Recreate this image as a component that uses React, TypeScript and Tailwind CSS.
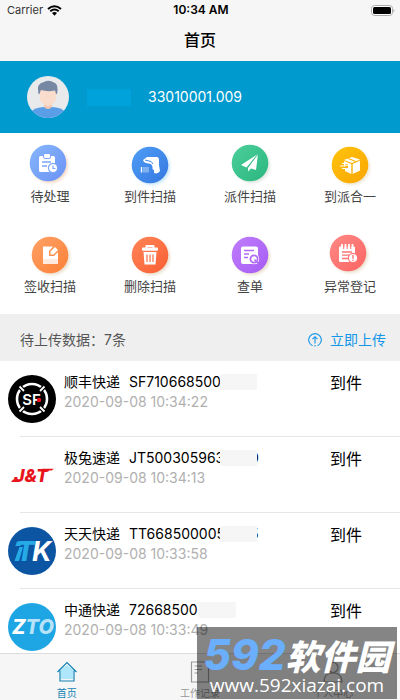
import React from "react";

type Action = {
  label: string;
  cx: number;
  cy: number;
  from: string;
  to: string;
  shadow: string;
  glyph: React.ReactNode;
};

// Glyphs are drawn around (0,0), the centre of their disc.
const actions: Action[] = [
  {
    label: "待处理", cx: 20, cy: 20, from: "#86b6fb", to: "#6b92f6", shadow: "#f3d9c4",
    glyph: (
      <>
        <rect x="-9" y="-7" width="16" height="16" rx="1.5" fill="#fff" />
        <rect x="-4.500" y="-9.500" width="7" height="5" rx="1.5" fill="#fff" stroke="#7ba6f9" />
        <path d="M-6 -1H3M-6 3H-1" stroke="#7ba6f9" strokeWidth="1.3" />
        <circle cx="5" cy="5" r="4.600" fill="#fff" stroke="#7ba6f9" strokeWidth="1.2" />
        <path d="M5 2.600V5.500H7.500" fill="none" stroke="#7ba6f9" strokeWidth="1.2" />
      </>
    ),
  },
  {
    label: "到件扫描", cx: 22, cy: 22, from: "#4e9df5", to: "#3578e0", shadow: "#c9e6f7",
    glyph: (
      <>
        <path d="M-7 -5L-3 -8H6Q9 -8.500 9 -5V0L10 6Q8 9.500 4 8L4 5Q2 5 2.500 1.500L1 -1L-4 -2L-6 -3Z" fill="#fff" />
        <path d="M-5 -5L1 -3.500L3 -1" fill="none" stroke="#4389ea" strokeWidth="1" />
        <path d="M-8.500 2V7.500" stroke="#fff" strokeWidth="1.4" />
        <path d="M-6 2V7.500M-4 2V7.500M-2 2V7.500" stroke="#fff" strokeWidth="0.9" opacity="0.75" />
      </>
    ),
  },
  {
    label: "派件扫描", cx: 22, cy: 20, from: "#4ccf9b", to: "#2bb67f", shadow: "#dfe6e0",
    glyph: (
      <>
        <path d="M8 -9L-9 2L-3.500 4.500Z" fill="#fff" />
        <path d="M8 -9L-2 5V8.500L1 5.500L6 7Z" fill="#fff" />
        <path d="M8 -9L-2.800 4.800V8" fill="none" stroke="#39c08b" strokeWidth="0.9" />
      </>
    ),
  },
  {
    label: "到派合一", cx: 22, cy: 22, from: "#fec40c", to: "#f9a502", shadow: "#eee7d6",
    glyph: (
      <>
        <path d="M-6 -5L2 -8L10 -5.500L2 -2Z" fill="#fff" />
        <path d="M-6 -4L1.300 -1V9L-5 6V3H-2V1H-6Z" fill="#fff" />
        <path d="M2.700 -1L10 -4.500V5.500L2.700 9Z" fill="#fff" />
        <path d="M-2 -6.500L6 -3.500" stroke="#fcb409" strokeWidth="1.1" />
        <path d="M-8 -1.500H-3M-10 1H-4M-8 3.500H-4" stroke="#fff" strokeWidth="1.2" />
        <path d="M-5 -.2H-2M-5 2.200H-2" stroke="#fcb409" strokeWidth=".9" />
      </>
    ),
  },
  {
    label: "签收扫描", cx: 22, cy: 22, from: "#ffa266", to: "#fb8037", shadow: "#eadfce",
    glyph: (
      <>
        <path d="M-7 -8.500H3L-1 -4V1H4L8 -3V9H-7Z" fill="#fff" />
        <path d="M.5 -.5V-3.500L5 -8L8 -5L3.500 -.5Z" fill="#fff" />
        <path d="M-7 4H8V9H-7Z" fill="#fb8c46" opacity=".18" />
      </>
    ),
  },
  {
    label: "删除扫描", cx: 22, cy: 22, from: "#ff8557", to: "#f95f33", shadow: "#eadfce",
    glyph: (
      <>
        <path d="M-3.500 -7V-9H3.500V-7" fill="none" stroke="#fff" strokeWidth="1.8" />
        <rect x="-8" y="-7.500" width="16" height="3.200" rx="1" fill="#fff" />
        <path d="M-6.500 -3H6.500L5.500 9.500H-5.500Z" fill="#fff" />
        <path d="M-3 -.5V7M0 -.5V7M3 -.5V7" stroke="#fb7044" strokeWidth="1.2" />
      </>
    ),
  },
  {
    label: "查单", cx: 22, cy: 22, from: "#c07dfb", to: "#a55cf4", shadow: "#eadfce",
    glyph: (
      <>
        <path d="M-7 -8.500H6Q8 -8.500 8 -6.500V9H-7Q-9 9 -9 7V-6.500Q-9 -8.500 -7 -8.500Z" fill="#fff" />
        <path d="M-6 -4.500H4M-6 -1H-1M-6 2.500H-2" stroke="#b16cf7" strokeWidth="1.3" />
        <circle cx="4" cy="4" r="5.200" fill="#fff" />
        <circle cx="4" cy="4" r="3.600" fill="none" stroke="#b16cf7" strokeWidth="1.800" />
        <path d="M4.500 4.500L8.500 9" stroke="#b16cf7" strokeWidth="1.600" />
      </>
    ),
  },
  {
    label: "异常登记", cx: 20, cy: 20, from: "#ff8a85", to: "#fb6464", shadow: "#eadfce",
    glyph: (
      <>
        <rect x="-9" y="-6.500" width="16" height="15.500" rx="1" fill="#fff" />
        <path d="M-6 -9V-5M-2.500 -9V-5M1 -9V-5M4.500 -9V-5" stroke="#fff" strokeWidth="1.800" />
        <path d="M-4.300 -7V-4M-.8 -7V-4M2.700 -7V-4" stroke="#fd7674" strokeWidth="1" />
        <path d="M-6 -1H4M-6 2.200H1M-6 5.500H0" stroke="#fd7674" strokeWidth="1.300" />
        <circle cx="5" cy="5" r="4.600" fill="#fff" stroke="#fd7674" strokeWidth="1.100" />
        <path d="M5 2V5.800M5 6.800V8" stroke="#fd7674" strokeWidth="1.400" />
      </>
    ),
  },
];

function ActionIcon({ action, id }: { action: Action; id: string }) {
  return (
    <svg width="44" height="44" viewBox="0 0 44 44" className="overflow-visible" aria-hidden="true">
      <defs>
        <linearGradient id={id} x1="0" y1="0" x2="1" y2="1">
          <stop offset="0" stopColor={action.from} />
          <stop offset="1" stopColor={action.to} />
        </linearGradient>
        <filter id={id + "s"} x="-30%" y="-30%" width="160%" height="160%">
          <feGaussianBlur stdDeviation="1.5" />
        </filter>
      </defs>
      <circle cx={action.cx + 2} cy={action.cy + 2} r="18" fill={action.shadow} filter={`url(#${id}s)`} />
      <circle cx={action.cx} cy={action.cy} r="18.300" fill={`url(#${id})`} />
      <g transform={`translate(${action.cx} ${action.cy})`}>{action.glyph}</g>
    </svg>
  );
}

function SfLogo() {
  return (
    <svg width="48" height="48" viewBox="0 0 48 48" role="img" aria-label="SF">
      <circle cx="24" cy="24" r="24" fill="#000" />
      <circle cx="24" cy="24" r="15" fill="none" stroke="#fff" strokeWidth="2.600" />
      <path d="M12 12L16 16M36 12L32 16M12 36L16 32M36 36L32 32" stroke="#000" strokeWidth="4.500" />
      <path d="M11.500 11.500L16 16M36.500 11.500L32 16M11.500 36.500L16 32M36.500 36.500L32 32" stroke="#fff" strokeWidth="1.800" />
      <text x="23.500" y="29.500" fontSize="15" fill="#fff" textAnchor="middle" className="font-['Inter',sans-serif] font-semibold">SF</text>
      <circle cx="31" cy="25" r="2.200" fill="#f00f1a" />
    </svg>
  );
}

function JtLogo() {
  return (
    <svg width="48" height="48" viewBox="0 0 48 48" role="img" aria-label="J&T">
      <text x="23" y="31" fontSize="18" fill="#e8141c" textAnchor="middle" className="font-['Inter',sans-serif] font-extrabold italic">J&amp;T</text>
      <path d="M5 28.500H12L10 31H3Z" fill="#e8141c" />
      <path d="M34 17.800H46L43.500 19.500H41L38.500 21H34Z" fill="#e8141c" />
    </svg>
  );
}

function TkLogo() {
  return (
    <svg width="48" height="48" viewBox="0 0 48 48" role="img" aria-label="TK">
      <circle cx="24" cy="24" r="24" fill="#0b55a2" />
      <path d="M9 14.500H14L12.500 19H7.300ZM11.500 20H15L11 34H6.500Z" fill="#25aae6" />
      <text x="8" y="34" fontSize="27" fill="#25aae6" className="font-['Inter',sans-serif] font-extrabold italic">T</text>
      <text x="24" y="34" fontSize="27" fill="#fff" className="font-['Inter',sans-serif] font-bold italic">K</text>
    </svg>
  );
}

function ZtoLogo() {
  return (
    <svg width="48" height="48" viewBox="0 0 48 48" role="img" aria-label="ZTO">
      <circle cx="24" cy="24" r="24" fill="#1ea5e4" />
      <text x="4" y="31" fontSize="20" fill="#fff" className="font-['Inter',sans-serif] font-extrabold italic">
        Z<tspan fill="#b7e2f7">TO</tspan>
      </text>
    </svg>
  );
}

const parcels = [
  { company: "顺丰快递", number: "SF710668500", width: "w-[91px]", tail: "", time: "2020-09-08 10:34:22", logo: <SfLogo /> },
  { company: "极兔速递", number: "JT500305963", width: "w-[91px]", tail: "0", time: "2020-09-08 10:34:13", logo: <JtLogo /> },
  { company: "天天快递", number: "TT668500005", width: "w-[91px]", tail: "5", time: "2020-09-08 10:33:58", logo: <TkLogo /> },
  { company: "中通快递", number: "72668500", width: "w-[70px]", tail: "", time: "2020-09-08 10:33:49", logo: <ZtoLogo /> },
];

export default function App() {
  return (
    <div className="relative flex h-screen flex-col overflow-hidden bg-white font-['Inter','Noto_Sans_CJK_SC',sans-serif] text-black">
      <header className="shrink-0 bg-[#f6f6f6]">
        <div className="grid h-5 grid-cols-3 items-center pr-[5px] pl-[7px] text-[11px]">
          <div className="flex items-center gap-1">
            <span className="text-[#333]">Carrier</span>
            <svg width="15" height="11" viewBox="0 0 15 11" aria-label="Wi-Fi">
              <path d="M1 4Q7.500 -1.500 14 4M3.300 6.300Q7.500 2.800 11.700 6.300" fill="none" stroke="#000" strokeWidth="2" />
              <path d="M5 8Q7.500 6 10 8L7.500 10.700Z" />
            </svg>
          </div>
          <span className="text-center text-xs font-semibold">10:34 AM</span>
          <svg width="24" height="11" viewBox="0 0 24 11" className="justify-self-end" aria-label="Battery">
            <rect x=".5" y=".5" width="21" height="10" rx="3" fill="#fff" stroke="#aaa" />
            <rect x="2" y="2" width="18" height="7" rx="1.500" />
            <path d="M22.500 3.500Q24 5.500 22.500 7.500Z" fill="#999" />
          </svg>
        </div>
        <h1 className="h-[41px] text-center text-base leading-[41px] font-medium">首页</h1>
      </header>

      <section className="flex h-[72px] shrink-0 items-center bg-[#009ace] pl-[27px]">
        <svg width="42" height="42" viewBox="0 0 42 42" role="img" aria-label="头像">
          <defs>
            <clipPath id="avatar"><circle cx="21" cy="21" r="21" /></clipPath>
          </defs>
          <g clipPath="url(#avatar)">
            <rect width="42" height="42" fill="#e8eaec" />
            <path d="M2 37Q8 31 17 31H25Q34 31 40 37V42H2Z" fill="#5a9ee8" />
            <path d="M17 26H25V31Q21 35 17 31Z" fill="#f3c6ae" />
            <path d="M12.500 14H29.500V21Q28 29 21 30Q14 29 12.500 21Z" fill="#f9dccb" />
            <path d="M11.500 18Q9 7 17 6Q22 3.500 27 6.500Q32 8 30 18H29Q28.500 16 28 14.500Q20 16 14 14Q13 16 12.500 18Z" fill="#7788a4" />
          </g>
        </svg>
        <span className="ml-[18px] h-[17px] w-[44px] bg-[#00a2dc]" />
        <span className="ml-[17px] text-sm text-white">33010001.009</span>
      </section>

      <section className="grid shrink-0 grid-cols-4 gap-y-7 pt-[10px] pb-[19px]">
        {actions.map((a, i) => (
          <button key={a.label} type="button" className="flex flex-col items-center">
            <ActionIcon action={a} id={"disc" + i} />
            <span className="text-[13px] leading-[18px] text-[#444]">{a.label}</span>
          </button>
        ))}
      </section>

      <div className="flex h-[47px] shrink-0 items-center justify-between bg-[#efefef] pt-[5px] pr-[14px] pl-5">
        <h2 className="text-sm text-[#555]">待上传数据：7条</h2>
        <button type="button" className="flex items-center gap-2 text-sm text-[#1296e8]">
          <svg width="14" height="14" viewBox="0 0 14 14" fill="none" stroke="#1296e8" strokeWidth="1.100" aria-hidden="true">
            <path d="M4.500 12.700A6.300 6.300 0 1 1 9.500 12.700M7 10.500V4M4.500 6.200L7 3.700L9.500 6.200M7 12V13.500" />
          </svg>
          立即上传
        </button>
      </div>

      <main className="min-h-0 flex-1 overflow-hidden">
        <ul>
          {parcels.map((p) => (
            <li key={p.number}>
              <div className="flex h-[75px] items-start pr-[38px] pl-2">
                <div className="mt-[14px] shrink-0">{p.logo}</div>
                <div className="mt-[11px] ml-2 flex-1">
                  <div className="flex h-5 items-center text-sm">
                    <span className="mr-[9px]">{p.company}</span>
                    <span className={p.width}>{p.number}</span>
                    <span className="z-10 h-4 w-[37px] bg-[#f6f6f6]" />
                    {p.tail && <span className="-ml-[7px]">{p.tail}</span>}
                  </div>
                  <time className="block text-sm leading-5 text-[#b0b0b0]">{p.time}</time>
                </div>
                <span className="mt-[10px] text-base leading-6">到件</span>
              </div>
              <div className="ml-5 h-px bg-[#e6e6e6]" />
            </li>
          ))}
        </ul>
      </main>

      <nav className="grid h-[47px] shrink-0 grid-cols-3 border-t border-[#dcdcdc] bg-[#f6f6f6] text-[10px] leading-4 text-[#999]">
        <a href="#home" className="flex flex-col items-center gap-0.5 pt-[7px] text-[#1482b4]">
          <svg width="22" height="22" viewBox="0 0 22 22" aria-hidden="true">
            <path d="M5 8.500L11 4L17 8.500V18H5Z" fill="#aee6fb" />
            <path d="M1.500 11L11 1.500L20.500 11M4 9.500V20H18V9.500" fill="none" stroke="#1482b4" strokeWidth="1.200" />
          </svg>
          首页
        </a>
        <a href="#records" className="flex flex-col items-center gap-0.5 pt-[7px]">
          <svg width="22" height="22" viewBox="0 0 22 22" fill="none" stroke="#999" strokeWidth="1.200" aria-hidden="true">
            <path d="M2.500 1H19.500V21H2.500ZM5.500 5H13M5.500 8.500H13M5.500 12H9" />
          </svg>
          工作记录
        </a>
        <a href="#me" className="flex flex-col items-center gap-0.5 pt-[7px]">
          <svg width="22" height="22" viewBox="0 0 22 22" fill="none" stroke="#999" strokeWidth="1.200" aria-hidden="true">
            <circle cx="11" cy="6.500" r="5" />
            <path d="M2 21Q2 12 11 12Q20 12 20 21Z" />
          </svg>
          个人中心
        </a>
      </nav>

      <div className="pointer-events-none absolute right-[3px] bottom-px z-20 flex h-[72px] w-[200px] flex-col items-center bg-black/48 pt-2">
        <div className="flex h-10 items-center whitespace-nowrap italic">
          <span className="text-[42px] leading-10 font-extrabold text-[#6aaefc]">592</span>
          <span className="font-['Noto_Sans_CJK_SC',sans-serif] text-[35px] leading-10 font-black text-white">软件园</span>
        </div>
        <span className="font-['Open_Sans',sans-serif] text-[19px] leading-5 font-medium text-white">www.592xiazai.com</span>
      </div>
    </div>
  );
}
